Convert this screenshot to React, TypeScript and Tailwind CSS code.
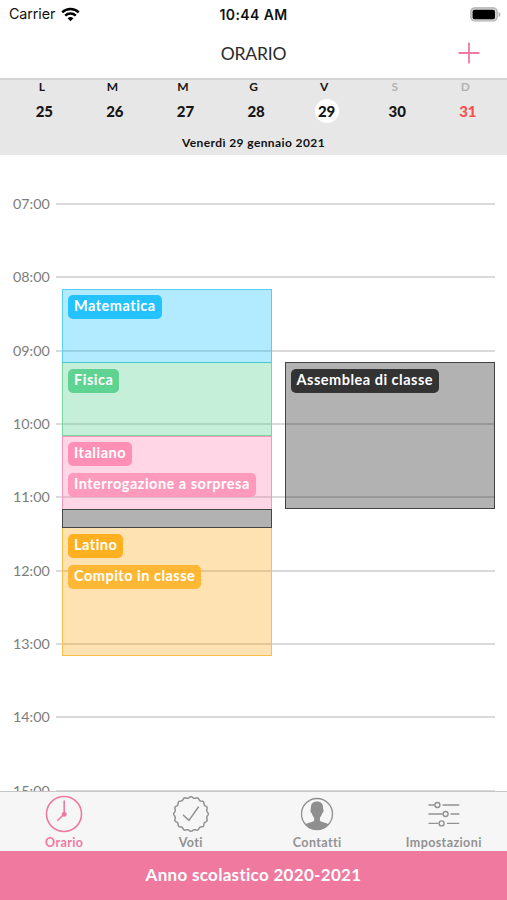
import { clsx } from "clsx"

const days = [
  { letter: "L", num: 25 },
  { letter: "M", num: 26 },
  { letter: "M", num: 27 },
  { letter: "G", num: 28 },
  { letter: "V", num: 29, selected: true },
  { letter: "S", num: 30, weekend: true },
  { letter: "D", num: 31, weekend: true, holiday: true },
]

const hours = ["07:00", "08:00", "09:00", "10:00", "11:00", "12:00", "13:00", "14:00", "15:00"]

function StatusBar() {
  return (
    <div className="h-7 grid grid-cols-3 items-center pl-[9px] pr-[6px] font-['Inter'] text-[#111]">
      <div className="flex items-center gap-[6px] text-[14.3px] tracking-[-0.1px]">
        <span>Carrier</span>
        <svg width="19" height="15" viewBox="0 0 19 15" fill="none" stroke="#000" strokeWidth="2.4">
          <path d="M1.2 5.4a12 12 0 0 1 16.6 0" />
          <path d="M4.2 8.7a7.6 7.6 0 0 1 10.6 0" />
          <path d="M9.5 14.2 6.6 11.3a4.2 4.2 0 0 1 5.8 0z" fill="#000" stroke="none" />
        </svg>
      </div>
      <div className="-ml-[3px] text-center text-[14px] font-semibold tracking-[0.4px] whitespace-nowrap">10:44 AM</div>
      <svg className="justify-self-end" width="31" height="15" viewBox="0 0 31 15">
        <rect x="0.8" y="0.8" width="26.4" height="13.2" rx="4" fill="#d4d4d4" stroke="#b0b0b0" strokeWidth="1.2" />
        <rect x="2.6" y="2.8" width="22.4" height="9.4" rx="2" fill="#000" />
        <path d="M28.6 4.9c2.4 1 2.4 4.2 0 5.2z" fill="#b0b0b0" />
      </svg>
    </div>
  )
}

function NavBar() {
  return (
    <div className="h-[50px] grid grid-cols-3 items-center">
      <h1 className="col-start-2 pt-[2px] text-center text-[17.5px] tracking-[-0.2px] text-[#2a2a2a]">ORARIO</h1>
      <svg className="justify-self-end mr-[27px] -mt-px" width="22" height="22" viewBox="0 0 22 22" stroke="#ee7aa3" strokeWidth="1.8">
        <path d="M11 0.5v21M0.5 11h21" />
      </svg>
    </div>
  )
}

function WeekStrip() {
  return (
    <div className="h-[77px] bg-[#e7e7e7] border-t-2 border-[#d3d3d3]">
      <div className="flex pl-[9px] pr-[4px]">
        {days.map((day) => (
          <div key={day.num} className="flex-1 flex flex-col items-center">
            <span className={clsx("-ml-[5px] h-3 text-[12px] leading-[13px] font-bold", day.weekend ? "text-[#b3b3b3]" : "text-[#151515]")}>
              {day.letter}
            </span>
            <span
              className={clsx(
                "mt-[7px] size-6 rounded-full text-center text-[15px] leading-6 font-black tracking-[-0.1px]",
                day.selected && "bg-white",
                day.holiday ? "text-[#f9504f]" : "text-[#151515]",
              )}
            >
              {day.num}
            </span>
          </div>
        ))}
      </div>
      <p className="mt-[12px] text-center text-[12px] leading-4 font-bold tracking-[0.4px] text-[#111]">Venerdì 29 gennaio 2021</p>
    </div>
  )
}

function Tag({ className, children }: { className: string; children: string }) {
  return (
    <span className={clsx("h-6 px-[6px] rounded-[5px] text-[14.5px] leading-[22px] font-bold tracking-[0.5px] text-white whitespace-nowrap", className)}>
      {children}
    </span>
  )
}

function Timeline() {
  return (
    <div className="relative h-[636px] overflow-hidden bg-white">
      <div className="pt-[12.5px]">
        {hours.map((hour) => (
          <div key={hour} className="h-[73.3px] flex items-center pl-[13px] pr-3">
            <span className="w-[43px] text-[14.3px] leading-5 text-[#7d7d7d]">{hour}</span>
            <span className="flex-1 h-[2px] bg-[#dadada]" />
          </div>
        ))}
      </div>

      {/* lessons sit over the hour lines, one column per calendar */}
      <div className="absolute inset-0 flex items-start gap-[12.5px] pl-[62px] pr-3">
        <div className="w-[210px] mt-[134px] flex flex-col">
          <div className="h-[73px] border border-[#54cdf8] border-b-0 bg-[#00b9ff]/30 p-[5px] flex flex-col items-start">
            <Tag className="bg-[#24c2ff]">Matematica</Tag>
          </div>
          <div className="h-[74px] border border-[#72d9a1] border-t-[#45c8c8] bg-[#42cb83]/30 p-[5px] pt-[6px] flex flex-col items-start">
            <Tag className="bg-[#5fd391]">Fisica</Tag>
          </div>
          <div className="h-[73px] border border-[#fc94bb] border-b-0 bg-[#ff77a9]/30 p-[5px] flex flex-col items-start gap-[6.5px]">
            <Tag className="bg-[#ff8fb5]">Italiano</Tag>
            <Tag className="bg-[#ff8fb5]/85">Interrogazione a sorpresa</Tag>
          </div>
          <div className="h-[19px] border border-[#444] bg-black/30" />
          <div className="h-[128px] border border-t-0 border-[#fbbd4d] bg-[#ff9f00]/30 p-[5px] pt-[6px] flex flex-col items-start gap-[6.5px]">
            <Tag className="bg-[#ffb020]">Latino</Tag>
            <Tag className="bg-[#ffb020]/85">Compito in classe</Tag>
          </div>
        </div>
        <div className="flex-1 mt-[207px]">
          <div className="h-[147px] border border-[#444] bg-black/30 p-[5px] pt-[6px] flex flex-col items-start">
            <Tag className="bg-[#333]">Assemblea di classe</Tag>
          </div>
        </div>
      </div>
    </div>
  )
}

function ClockIcon() {
  return (
    <svg width="38" height="38" viewBox="0 0 38 38" fill="none" stroke="#ee7aa3" strokeWidth="1.6" strokeLinecap="round">
      <circle cx="19" cy="19" r="17.5" />
      <path d="M19.2 6v13L12.8 25.2" />
      <circle cx="19.2" cy="19.2" r="1.7" fill="#ee7aa3" />
    </svg>
  )
}

// scalloped edge: 16 shallow bumps around the circle
const badgePath =
  Array.from({ length: 96 }, (_, i) => {
    const a = (i / 96) * Math.PI * 2
    const r = 16.7 + 0.7 * Math.cos(a * 16)
    return `${i ? "L" : "M"}${(19 + r * Math.cos(a)).toFixed(2)} ${(19 + r * Math.sin(a)).toFixed(2)}`
  }).join("") + "Z"

function BadgeIcon() {
  return (
    <svg width="38" height="38" viewBox="0 0 38 38" fill="none" stroke="#929292" strokeWidth="1.5" strokeLinecap="round" strokeLinejoin="round">
      <path d={badgePath} />
      <path d="M11.4 20.2 17 25.4 26.4 12" />
    </svg>
  )
}

function ContactIcon() {
  return (
    <svg width="38" height="38" viewBox="0 0 38 38">
      <circle cx="19" cy="19" r="15.5" fill="none" stroke="#8f8f8f" strokeWidth="1.3" />
      <path
        fill="#8f8f8f"
        d="M19 6.5c-4.6 0-6.3 2.6-6.1 7.2-.9.8-.4 4 1 4.6.4 2 1.2 3.4 2.2 4.3v3.2c-1 1.2-6 1.9-8.9 3.7a15.7 15.7 0 0 0 23.6 0c-2.9-1.8-7.9-2.5-8.9-3.7v-3.2c1-.9 1.8-2.3 2.2-4.3 1.4-.6 1.9-3.8 1-4.6.2-4.6-1.5-7.2-6.1-7.2z"
      />
    </svg>
  )
}

function SettingsIcon() {
  return (
    <svg width="38" height="38" viewBox="0 0 38 38" fill="none" stroke="#929292" strokeWidth="1.4">
      <path d="M3.5 10h6.2M17.5 10h16.8M3.5 19h14M25.5 19h8.8M3.5 28.4h9.9M22 28.4h12.3" />
      <circle cx="12.4" cy="10" r="2.5" />
      <circle cx="20.6" cy="19" r="2.5" />
      <circle cx="16.6" cy="28.4" r="2.5" />
    </svg>
  )
}

const tabs = [
  { label: "Orario", icon: <ClockIcon />, active: true },
  { label: "Voti", icon: <BadgeIcon /> },
  { label: "Contatti", icon: <ContactIcon /> },
  { label: "Impostazioni", icon: <SettingsIcon /> },
]

export default function App() {
  return (
    <div className="w-[507px] h-[900px] flex flex-col overflow-hidden bg-white font-['Lato',sans-serif]">
      <StatusBar />
      <NavBar />
      <WeekStrip />
      <Timeline />
      <nav className="h-[60px] grid grid-cols-4 pl-px border-t border-[#c6c6c6] bg-[#f6f6f6]">
        {tabs.map((tab) => (
          <div key={tab.label} className={clsx("flex flex-col items-center pt-[3px]", tab.active ? "text-[#ee7aa3]" : "text-[#929292]")}>
            {tab.icon}
            <span className="mt-[2px] text-[12.5px] leading-4 font-bold tracking-[0.4px]">{tab.label}</span>
          </div>
        ))}
      </nav>
      <footer className="flex-1 pb-px bg-[#ef799f] flex items-center justify-center text-[17px] font-bold tracking-[0.3px] text-white">
        Anno scolastico 2020-2021
      </footer>
    </div>
  )
}
